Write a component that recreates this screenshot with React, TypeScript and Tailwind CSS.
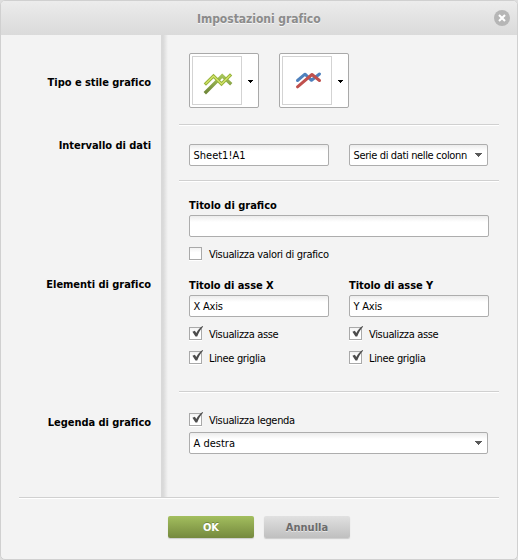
import type { ReactNode } from "react";

function Section({ label, height, labelTop, divider = true, children }: {
  label: ReactNode;
  height: string;
  labelTop: string;
  divider?: boolean;
  children: ReactNode;
}) {
  return (
    <section className={`flex ${height}`}>
      <div className={`w-[160px] shrink-0 pr-[10px] text-right font-bold leading-4 tracking-[-0.04px] ${labelTop}`}>{label}</div>
      <div className="w-[7px] shrink-0 bg-linear-to-r from-[#d9d9d9] from-30% to-[#f3f3f3]" />
      <div className={`ml-[11px] w-[320px] pl-[10px] ${divider ? "border-b border-[#d0d0d0] shadow-[0_1px_0_#fff]" : ""}`}>
        {children}
      </div>
    </section>
  );
}

const field =
  "flex h-[22px] items-center rounded-[2px] border border-[#adadad] bg-linear-to-b from-[#ececec] via-white via-30% to-white pl-[3.5px] pt-[2px] leading-4";

function Field({ width, children }: { width: string; children?: ReactNode }) {
  return <div className={`${field} ${width}`}>{children}</div>;
}

function Select({ width, children }: { width: string; children: ReactNode }) {
  return (
    <div className={`${field} ${width} justify-between pr-[5px]`}>
      {children}
      <svg width="7" height="4" viewBox="0 0 7 4" className="mb-[3px] shrink-0" shapeRendering="crispEdges">
        <path d="M0 0h7v1H0zM1 1h5v1H1zM2 2h3v1H2zM3 3h1v1H3z" fill="#5a5a5a" />
      </svg>
    </div>
  );
}

function Check({ on, children }: { on?: boolean; children: ReactNode }) {
  return (
    <div className="flex h-[13px] items-center gap-[7px]">
      <div className="relative size-[13px] border border-[#a9a9a9] bg-linear-to-b from-[#f2f2f2] to-white to-40% shadow-[0_1px_0_#fff]">
        {on && (
          <svg className="absolute -top-[2px] left-[2px]" width="12" height="12" viewBox="0 0 12 12">
            <path d="M.4 5.7 2.9 4.8 4.3 6.9C6 4 8 1.6 10.6.1L11.1.8C8.9 3 6.9 6.2 5.2 10.5H3.5Z" fill="#4d4d4d" />
          </svg>
        )}
      </div>
      <span className="pt-[2px] leading-4 tracking-[-0.33px]">{children}</span>
    </div>
  );
}

function ChartButton({ children }: { children: ReactNode }) {
  return (
    <div className="flex h-[55px] w-[70px] items-center rounded-[2px] border border-[#a9a9a9] bg-white pl-[2px]">
      <div className="h-[49px] w-[50px] border border-[#d3d3d3]">{children}</div>
      <svg className="ml-[6px] mt-px" width="5" height="3" viewBox="0 0 5 3" shapeRendering="crispEdges">
        <path d="M0 0h5v1H0zM1 1h3v1H1zM2 2h1v1H2z" fill="#000" />
      </svg>
    </div>
  );
}

export default function App() {
  return (
    <main className="h-[560px] w-[518px] bg-[#dedede] font-['DejaVu_Sans_Condensed','DejaVu_Sans',sans-serif] text-[11px] font-stretch-condensed whitespace-nowrap text-black">
      <div className="flex h-full flex-col rounded-[5px] border border-[#d0d0d0] bg-[#f3f3f3]">
        <header className="flex h-[34px] items-center justify-center rounded-t-[4px] bg-linear-to-b from-[#ececec] to-[#dadada] pl-[196px] pr-[7px] text-[12px] font-bold text-[#8b8b8b] [text-shadow:0_1px_0_#f5f5f5]">
          <h1 className="w-[124px] shrink-0 pt-[2px] tracking-[-0.04px]">Impostazioni grafico</h1>
          <div className="flex grow justify-end">
            <svg width="16" height="16" viewBox="0 0 16 16">
              <circle cx="8" cy="8" r="8" fill="#b6b6b6" />
              <path d="m5 5 6 6m0-6-6 6" stroke="#fff" strokeWidth="2.1" />
            </svg>
          </div>
        </header>

        <Section label="Tipo e stile grafico" height="h-[90px]" labelTop="pt-[40px]">
          <div className="flex gap-5 pt-[18px]">
            <ChartButton>
              <svg width="48" height="47" viewBox="0 0 48 47" fill="none" strokeLinecap="square">
                <defs>
                  <linearGradient id="stem" x1="0" y1="0" x2="0" y2="1">
                    <stop stopColor="#a5c45a" />
                    <stop offset="1" stopColor="#72893b" />
                  </linearGradient>
                </defs>
                <path d="M13 35 29.2 18.8 37 26" stroke="url(#stem)" strokeWidth="3.4" />
                <path d="M13 26.5 20.5 19 28.5 27 37 18.5" stroke="#98b43c" strokeWidth="3.2" />
                <path d="M13 26.5 20.5 19 28.5 27 37 18.5" stroke="#d7e76d" strokeWidth="1.2" />
              </svg>
            </ChartButton>
            <ChartButton>
              <svg width="48" height="47" viewBox="0 0 48 47" fill="none" strokeLinecap="round" strokeLinejoin="round" strokeWidth="3">
                <path d="M14.5 23.5 22 17.2 28.5 23.3 36.5 17" stroke="#4f81bd" />
                <path d="M14.5 29.8 29 17.5 36.5 23.5" stroke="#c0504d" />
              </svg>
            </ChartButton>
          </div>
        </Section>

        <Section label="Intervallo di dati" height="h-[56px]" labelTop="pt-[13px]">
          <div className="flex gap-5 pt-[19px]">
            <Field width="w-[140px]">Sheet1!A1</Field>
            <Select width="w-[139px]">
              <span className="tracking-[-0.36px]">Serie di dati nelle colonn</span>
            </Select>
          </div>
        </Section>

        <Section label="Elementi di grafico" height="h-[211px]" labelTop="pt-[96px]">
          <div className="pt-[17px]">
            <div className="h-[17px] font-bold leading-4">Titolo di grafico</div>
            <Field width="w-[300px]" />
            <div className="pt-[10px]"><Check>Visualizza valori di grafico</Check></div>
          </div>
          <div className="flex gap-5 pt-[18px]">
            {["X", "Y"].map((axis) => (
              <div key={axis} className="w-[140px]">
                <div className="h-[17px] font-bold leading-4 tracking-[-0.05px]">Titolo di asse {axis}</div>
                <Field width="w-[140px]"><span className="tracking-[-0.2px]">{axis} Axis</span></Field>
                <div className="flex flex-col gap-[11px] pt-[10px]">
                  <Check on>Visualizza asse</Check>
                  <Check on>Linee griglia</Check>
                </div>
              </div>
            ))}
          </div>
        </Section>

        <Section label="Legenda di grafico" height="h-[105px]" labelTop="pt-[23px]" divider={false}>
          <div className="flex flex-col gap-[6px] pt-[21px]">
            <Check on>Visualizza legenda</Check>
            <Select width="w-[299px]">A destra</Select>
          </div>
        </Section>

        <footer className="mx-[18px] flex gap-[10px] border-t border-[#d0d0d0] pl-[149px] pt-[18px] font-bold shadow-[inset_0_1px_0_#fff]">
          <button className="h-[22px] w-[86px] rounded-[2px] bg-linear-to-b from-[#a3bf5e] to-[#75893e] pt-[2px] text-white shadow-[0_1px_1px_#ccc] [text-shadow:0_-1px_0_#71853d]">OK</button>
          <button className="h-[22px] w-[86px] rounded-[2px] bg-linear-to-b from-[#e1e1e1] to-[#bfbfbf] pt-[2px] text-[#6b6b6b] shadow-[0_1px_1px_#ccc] [text-shadow:0_1px_0_#e5e5e5]">Annulla</button>
        </footer>
      </div>
    </main>
  );
}
